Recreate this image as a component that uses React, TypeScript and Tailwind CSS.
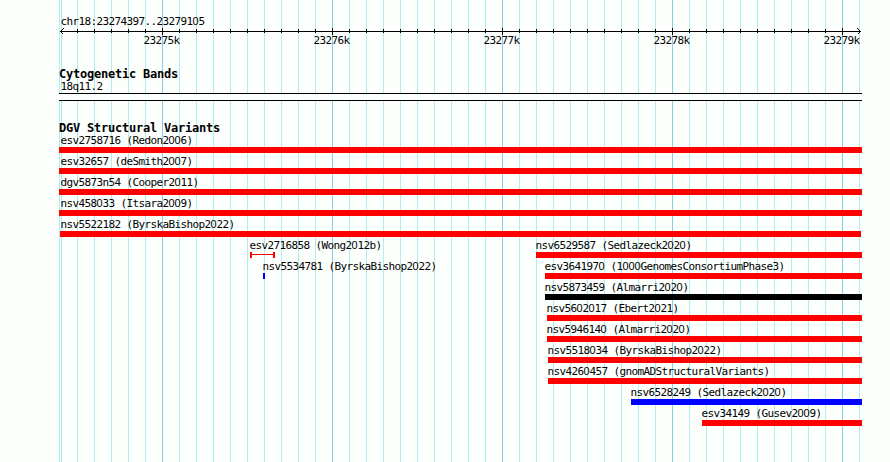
import { clsx } from 'clsx';

interface Feature {
  name: string;
  source: string;
  start: number;
  end: number;
  labelX: number;
  color?: string;
  ranged?: boolean;
}

const RED = 'bg-[#ff0000]';
const BLUE = 'bg-[#0000ff]';
const BLACK = 'bg-black';

// Each entry is one packed row of the track, positions in pixels.
const rows: Feature[][] = [
  [{ name: 'esv2758716', source: 'Redon2006', start: 59, end: 862, labelX: 60 }],
  [{ name: 'esv32657', source: 'deSmith2007', start: 59, end: 862, labelX: 60 }],
  [{ name: 'dgv5873n54', source: 'Cooper2011', start: 59, end: 862, labelX: 60 }],
  [{ name: 'nsv458033', source: 'Itsara2009', start: 59, end: 862, labelX: 60 }],
  [{ name: 'nsv5522182', source: 'ByrskaBishop2022', start: 60, end: 861, labelX: 60 }],
  [
    { name: 'esv2716858', source: 'Wong2012b', start: 250, end: 275, labelX: 249, ranged: true },
    { name: 'nsv6529587', source: 'Sedlazeck2020', start: 536, end: 862, labelX: 535 },
  ],
  [
    { name: 'nsv5534781', source: 'ByrskaBishop2022', start: 263, end: 265, labelX: 262, color: BLUE },
    { name: 'esv3641970', source: '1000GenomesConsortiumPhase3', start: 545, end: 862, labelX: 544 },
  ],
  [{ name: 'nsv5873459', source: 'Almarri2020', start: 545, end: 862, labelX: 544, color: BLACK }],
  [{ name: 'nsv5602017', source: 'Ebert2021', start: 547, end: 862, labelX: 546 }],
  [{ name: 'nsv5946140', source: 'Almarri2020', start: 547, end: 862, labelX: 546 }],
  [{ name: 'nsv5518034', source: 'ByrskaBishop2022', start: 548, end: 862, labelX: 547 }],
  [{ name: 'nsv4260457', source: 'gnomADStructuralVariants', start: 548, end: 862, labelX: 547 }],
  [{ name: 'nsv6528249', source: 'Sedlazeck2020', start: 631, end: 862, labelX: 630, color: BLUE }],
  [{ name: 'esv34149', source: 'Gusev2009', start: 702, end: 862, labelX: 701 }],
];

const ticks = Array.from({ length: 47 }, (_, i) => 77 + i * 17);
const isMajor = (x: number) => (x - 162) % 170 === 0;
const majors = ticks.filter(isMajor);

// Monospace label with an undotted zero.
function Label({ text, className }: { text: string; className?: string }) {
  return (
    <span className={clsx('block whitespace-pre pl-[0.5px] text-[11px] leading-[13px] tracking-[-0.622px]', className)}>
      {text.split(/(0)/).map((part, i) =>
        part === '0' ? (
          <span key={i} className="inline-block w-[6px] text-center font-['Liberation_Sans',sans-serif] leading-[11px] tracking-normal">
            0
          </span>
        ) : (
          part
        ),
      )}
    </span>
  );
}

function Heading({ text }: { text: string }) {
  return (
    <h2 className="ml-[59px] h-[12px] whitespace-pre text-[12px] font-bold leading-[13px] tracking-[-0.224px]">{text}</h2>
  );
}

function GridLines() {
  return (
    <svg className="absolute inset-0" width="890" height="462" shapeRendering="crispEdges">
      {[59, 61, ...ticks].map((x) => (
        <rect key={x} x={x} y={0} width={1} height={462} fill={isMajor(x) ? '#87ceeb' : '#afeeee'} />
      ))}
    </svg>
  );
}

function Ruler() {
  return (
    <svg className="block" width="890" height="8" shapeRendering="crispEdges">
      <rect x={60} y={3} width={801} height={1} />
      {ticks.slice(0, -1).map((x) => (
        <rect key={x} x={x} y={isMajor(x) ? 0 : 1} width={1} height={isMajor(x) ? 7 : 4} />
      ))}
      <path d="M63.5 .5L60.5 3.5L63.5 6.5M857.5 .5L860.5 3.5L857.5 6.5" fill="none" stroke="#000" />
    </svg>
  );
}

function Glyph({ feature }: { feature: Feature }) {
  const width = feature.end - feature.start;
  if (feature.ranged) {
    return (
      <div className="flex h-[6px]" style={{ width }}>
        <div className="h-[6px] w-[2px] bg-[#ff0000]" />
        <div className="mt-[2px] h-px flex-1 bg-[#ff0000]" />
        <div className="h-[6px] w-[2px] bg-[#ff0000]" />
      </div>
    );
  }
  return <div className={clsx('h-[6px]', feature.color ?? RED)} style={{ width }} />;
}

export default function App() {
  return (
    <div className="relative h-[462px] w-[890px] overflow-hidden bg-[#fdfffc] font-['DejaVu_Sans_Mono',monospace] text-black">
      <GridLines />
      <main className="relative flex flex-col">
        <Label text="chr18:23274397..23279105" className="ml-[60px] mt-[15px]" />
        <Ruler />
        <div className="-mt-[2px] ml-[143px] flex">
          {majors.map((x, i) => (
            <Label key={x} text={`${23275 + i}k`} className="w-[170px] shrink-0" />
          ))}
        </div>

        <section className="mt-[21px]">
          <Heading text="Cytogenetic Bands" />
          <Label text="18q11.2" className="ml-[60px]" />
          <div className="ml-[59px] h-[8px] w-[803px] border-y border-black bg-[#fdfffc]" />
        </section>

        <section className="mt-[21px]">
          <Heading text="DGV Structural Variants" />
          {rows.map((row) => (
            <div key={row[0].name} className="grid h-[21px] grid-cols-1">
              {row.map((feature) => (
                <div key={feature.name} className="[grid-area:1/1]">
                  <div style={{ marginLeft: feature.labelX }}>
                    <Label text={`${feature.name} (${feature.source})`} />
                  </div>
                  <div style={{ marginLeft: feature.start }}>
                    <Glyph feature={feature} />
                  </div>
                </div>
              ))}
            </div>
          ))}
        </section>
      </main>
    </div>
  );
}
